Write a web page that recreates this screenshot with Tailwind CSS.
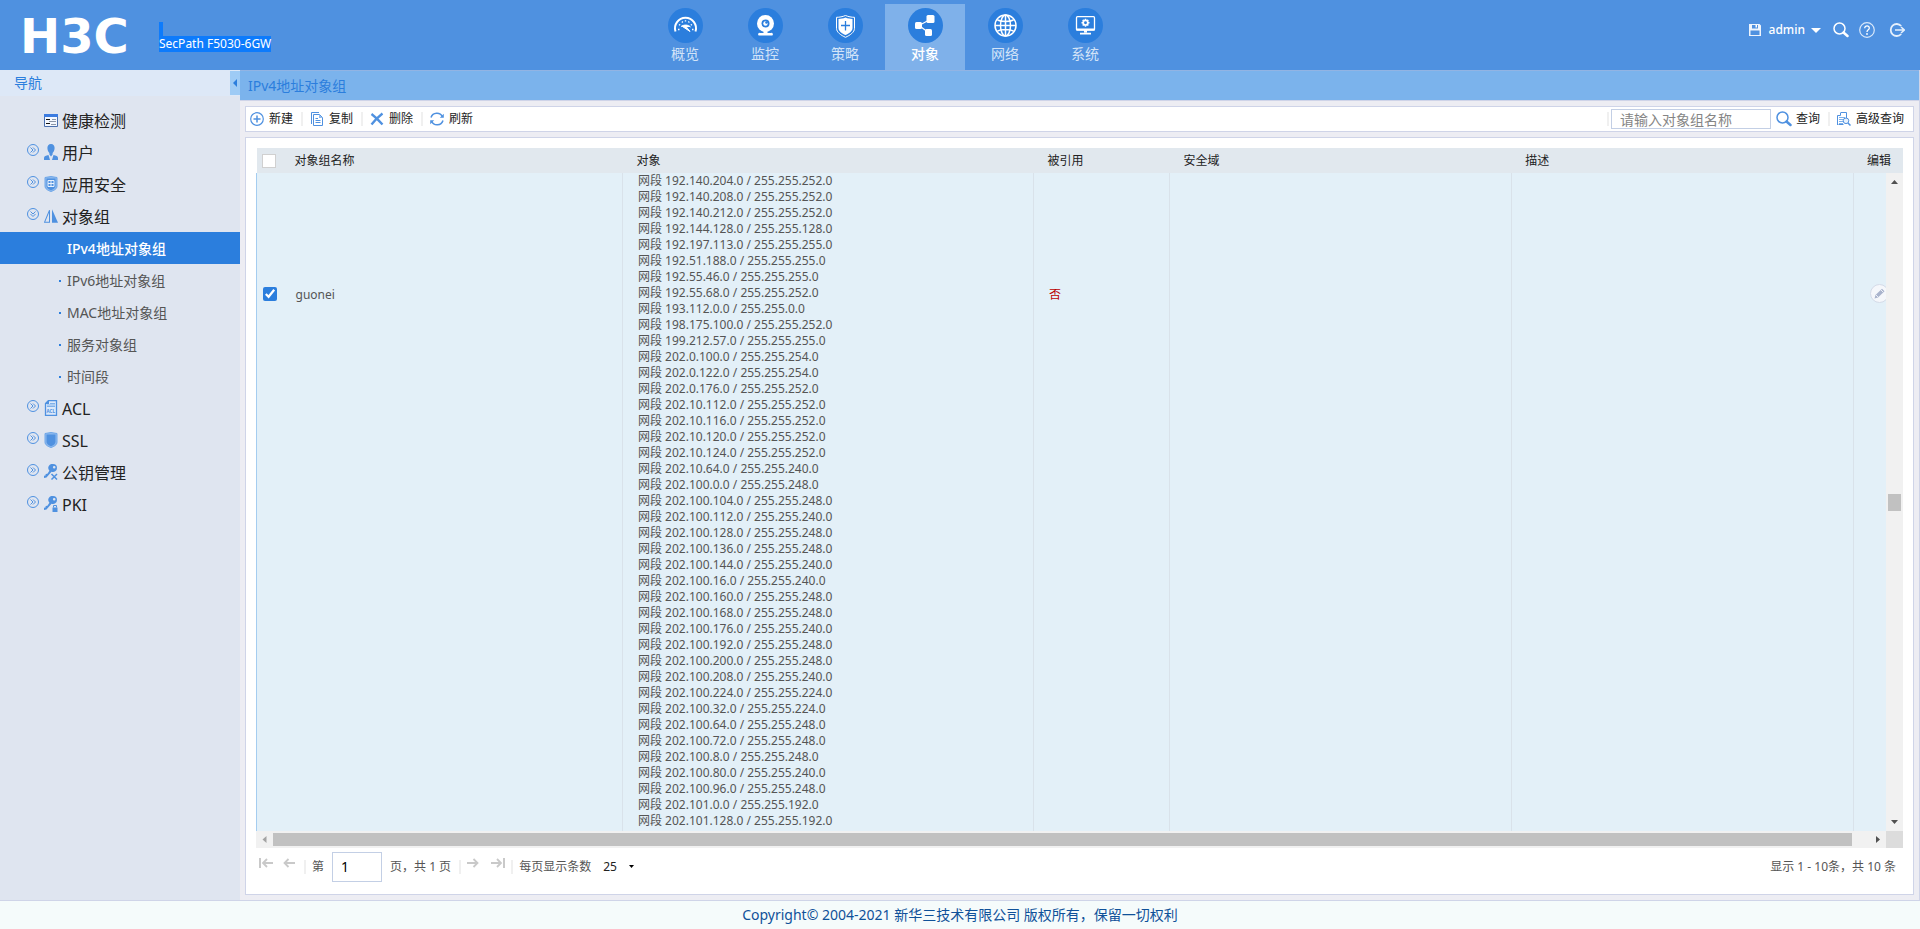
<!DOCTYPE html>
<html lang="zh-CN">
<head>
  <meta charset="UTF-8">
  <meta name="viewport" content="width=device-width, initial-scale=1.0">
  <title>H3C SecPath F5030-6GW</title>
  <script src="https://cdn.jsdelivr.net/npm/@tailwindcss/browser@4"></script>
</head>
<body class="flex min-h-screen flex-col bg-[#ededf3] font-['Noto_Sans','Noto_Sans_CJK_SC',sans-serif] text-xs text-[#222]">
  <!-- shared icons -->
  <svg class="hidden" xmlns="http://www.w3.org/2000/svg">
    <symbol id="expand" viewBox="0 0 12 12">
      <circle cx="6" cy="6" r="5.5" fill="none" stroke="#4f91e0"/>
      <path d="M3.5 3.5 6 6 3.5 8.5M6 3.5 8.500 6 6 8.500" fill="none" stroke="#4f91e0"/>
    </symbol>
    <symbol id="magnifier" viewBox="0 0 16 16">
      <circle cx="6.500" cy="6.500" r="5.500" fill="none" stroke="currentColor" stroke-width="1.500"/>
      <path d="m10.500 10.500 4 3.500" fill="none" stroke="currentColor" stroke-width="2.500" stroke-linecap="round"/>
    </symbol>
    <symbol id="key" viewBox="0 0 14 16">
      <path d="M9 0a4 4 0 0 1 4 4 4 4 0 0 1-5.500 3.700L2.500 13.500 0 14v-2.200l1.500-.3.200-1.600 1.700-.2 2-3A4 4 0 0 1 9 0Zm1.200 2a1.300 1.300 0 1 0 0 2.600 1.300 1.300 0 0 0 0-2.600Z" fill="#4f91e0" fill-rule="evenodd"/>
    </symbol>
  </svg>

  <header class="flex h-[70px] shrink-0 bg-[#4f91e0] text-white">
    <div class="flex w-[645px] shrink-0 gap-4 pl-5">
      <a href="#" class="w-[123px] font-['DejaVu_Sans'] text-5xl leading-[72px] font-bold">H3C</a>
      <div class="pt-[22px]">
        <div class="h-[14px] w-1 bg-[#0d7bfc]"></div>
        <div class="bg-[#0d7bfc] text-xs leading-4">SecPath F5030-6GW</div>
      </div>
    </div>
    <nav class="flex pt-1 text-sm leading-[22px] text-[#d3e4f8]">
      <a href="#" class="flex w-20 flex-col items-center pt-1">
        <svg class="size-[35px]" viewBox="0 0 35 35">
          <circle cx="17.500" cy="17.500" r="17.500" fill="#2b7edd"/>
          <path d="M7.500 23.500a10.500 10.500 0 1 1 20 0" fill="none" stroke="#fff" stroke-width="2"/>
          <path d="M10 21.500h1.500M24 21.500h1.500M11 16.500l1.200.7M24 16.500l-1.200.7M14 13.500l.7 1M21.200 13.500l-.7 1M17.500 12.200v1.300" fill="none" stroke="#fff" stroke-width="1.400"/>
          <path d="M13 18.500c3-2 7-2 9.500.5M14.500 18.500l7.500 5-4-5z" fill="#fff" stroke="#fff"/>
        </svg>
        概览
      </a>
      <a href="#" class="flex w-20 flex-col items-center pt-1">
        <svg class="size-[35px]" viewBox="0 0 35 35">
          <circle cx="17.500" cy="17.500" r="17.500" fill="#2b7edd"/>
          <circle cx="17.500" cy="15.500" r="8.500" fill="#fff"/>
          <circle cx="17.500" cy="15.500" r="4" fill="#2b7edd"/>
          <circle cx="17.500" cy="15.500" r="2.200" fill="#fff"/>
          <circle cx="18.500" cy="14.500" r="1.300" fill="#2b7edd"/>
          <path d="M15.500 23h4v2H23a1 1 0 0 1 1 2.500H11A1 1 0 0 1 12 25h3.500z" fill="#fff"/>
        </svg>
        监控
      </a>
      <a href="#" class="flex w-20 flex-col items-center pt-1">
        <svg class="size-[35px]" viewBox="0 0 35 35">
          <circle cx="17.500" cy="17.500" r="17.500" fill="#2b7edd"/>
          <path d="M17.500 7.500c3 1.200 6 1.800 9 1.800v11c0 4-4.500 7-9 9-4.500-2-9-5-9-9v-11c3 0 6-.6 9-1.800Z" fill="none" stroke="#fff"/>
          <path d="M17.500 9.500c2.500 1 4.800 1.400 7 1.500v9c0 3.200-3.500 5.500-7 7-3.500-1.500-7-3.800-7-7v-9c2.200-.1 4.500-.5 7-1.500Z" fill="#fff"/>
          <path d="M17.500 13v9.500M13 17.500h9" stroke="#2b7edd" stroke-width="1.300"/>
        </svg>
        策略
      </a>
      <a href="#" class="flex w-20 flex-col items-center bg-[#7fb1ea] pt-1 font-medium text-white">
        <svg class="size-[35px]" viewBox="0 0 35 35">
          <circle cx="17.500" cy="17.500" r="17.500" fill="#2b7edd"/>
          <path d="M20.500 24.500 11 17.500 22 11.500" fill="none" stroke="#fff" stroke-width="1.200"/>
          <rect x="7" y="14" width="7" height="7" rx="1.500" fill="#fff"/>
          <rect x="18.500" y="7" width="8" height="8" rx="1.500" fill="#fff"/>
          <rect x="17" y="21" width="7" height="7" rx="1.500" fill="#fff"/>
        </svg>
        对象
      </a>
      <a href="#" class="flex w-20 flex-col items-center pt-1">
        <svg class="size-[35px]" viewBox="0 0 35 35">
          <circle cx="17.500" cy="17.500" r="17.500" fill="#2b7edd"/>
          <g fill="none" stroke="#fff" stroke-width="1.500">
            <circle cx="17.500" cy="17.500" r="10.500"/>
            <ellipse cx="17.500" cy="17.500" rx="5" ry="10.500"/>
            <path d="M17.500 7v21M7 17.500h21M9.500 12c4 2 12 2 16 0M9.500 23c4-2 12-2 16 0"/>
          </g>
        </svg>
        网络
      </a>
      <a href="#" class="flex w-20 flex-col items-center pt-1">
        <svg class="size-[35px]" viewBox="0 0 35 35">
          <circle cx="17.500" cy="17.500" r="17.500" fill="#2b7edd"/>
          <rect x="8.500" y="8.700" width="18" height="13.500" rx="1" fill="none" stroke="#fff" stroke-width="1.300"/>
          <path d="M8.500 20.500h18v2h-18zM16 22h3v2.500h-3zM12 24.700h11V26.500H12z" fill="#fff"/>
          <circle cx="17.500" cy="14.700" r="2.300" fill="none" stroke="#fff" stroke-width="1.700"/>
          <path d="M17.500 10.700v1.500M17.500 17.200v1.500M13.500 14.700H15M20 14.700h1.500M14.700 11.900l1 1M19.300 16.500l1 1M20.300 11.900l-1 1M15.700 16.500l-1 1" stroke="#fff" stroke-width="1.500"/>
        </svg>
        系统
      </a>
    </nav>
    <div class="ml-auto flex h-[60px] items-center pr-[15px]">
      <button type="button" aria-label="保存" class="mr-2">
        <svg class="size-3" viewBox="0 0 12 12"><path d="M0 0h10.500L12 1.500V12H0zM3 1v3.500h6V1zM1.500 6.500V11h9V6.500z" fill="#fff" fill-rule="evenodd" opacity=".9"/><path d="M6.500 1H8v2.500H6.500z" fill="#fff"/></svg>
      </button>
      <button type="button" class="mr-3 flex items-center gap-[6px] font-medium">
        admin
        <svg class="h-[5px] w-[10px]" viewBox="0 0 10 5"><path d="M0 0h10L5 5z" fill="#fff"/></svg>
      </button>
      <button type="button" aria-label="搜索" class="mr-[10px]"><svg class="size-4"><use href="#magnifier"/></svg></button>
      <button type="button" aria-label="帮助" class="mr-[14px]">
        <svg class="size-4" viewBox="0 0 16 16"><circle cx="8" cy="8" r="7.300" fill="none" stroke="#d9e8fa" stroke-width="1.200"/><path d="M5.700 6.300C5.700 3 10.500 3.200 10.300 6.200 10.200 7.800 8 7.800 8 10" fill="none" stroke="#fff" stroke-width="1.300"/><circle cx="8" cy="12" r=".9" fill="#fff"/></svg>
      </button>
      <button type="button" aria-label="退出">
        <svg class="size-4" viewBox="0 0 16 16"><path d="M12.200 4A6 6 0 1 0 12.200 12" fill="none" stroke="#e6f0fc" stroke-width="1.800"/><path d="M6 8h9M12 5l3.300 3L12 11" fill="none" stroke="#e6f0fc" stroke-width="1.500"/></svg>
      </button>
    </div>
  </header>

  <div class="flex grow">
    <aside class="w-60 shrink-0 bg-[#dfe5f0]">
      <div class="mb-2 flex h-[26px] items-center justify-between bg-[#dde8f7] pl-[14px]">
        <h2 class="text-sm text-[#2b7edd]">导航</h2>
        <button type="button" aria-label="收起导航" class="flex h-6 w-[10px] items-center justify-center bg-[#9ecbf5]">
          <svg class="h-2 w-1" viewBox="0 0 4 8"><path d="M4 0v8L0 4z" fill="#2b7edd"/></svg>
        </button>
      </div>
      <nav>
        <a href="#" class="flex h-8 items-center gap-1 pt-[2px] pl-[44px] text-base">
          <svg class="size-[14px]" viewBox="0 0 14 14"><path d="M.5.5h13v12H.5z" fill="#f4f8ff" stroke="#4a6fae"/><path d="M0 0h14v3H0z" fill="#3b7be0"/><path d="M2 5.500h4M2 9.500h4" stroke="#111"/><path d="M5 7.500h7M8 5.500h4M7 10.500h5" stroke="#8b96a8"/></svg>
          健康检测
        </a>
        <a href="#" class="flex h-8 items-center pt-[2px] text-base">
          <svg class="mr-[5px] mb-[6px] ml-[27px] size-3"><use href="#expand"/></svg>
          <svg class="mr-1 mb-[2px] h-4 w-[14px]" viewBox="0 0 14 16"><path d="M7 0c2.500 0 3.600 1.700 3.600 4S9.300 8.500 8.600 9v1.500L7 12.500 5.400 10.500V9C4.700 8.500 3.400 6.300 3.400 4S4.500 0 7 0ZM4.500 11 6 16H0v-2c0-2 2-2.500 4.500-3ZM9.500 11c2.500.5 4.500 1 4.500 3v2H8z" fill="#4f91e0"/></svg>
          用户
        </a>
        <a href="#" class="flex h-8 items-center pt-[2px] text-base">
          <svg class="mr-[5px] mb-[6px] ml-[27px] size-3"><use href="#expand"/></svg>
          <svg class="mr-1 mb-[2px] h-4 w-[14px]" viewBox="0 0 14 16"><path d="M1 1.500 7 .5l6 1V10c0 3-3 4.500-6 5.500C4 14.500 1 13 1 10z" fill="#8db9ee" stroke="#6ea6e8"/><path d="M2.500 2.500h9V10c0 2-2 3.300-4.500 4.300C4.500 13.300 2.500 12 2.500 10z" fill="#4f91e0"/><path d="M4 4.500h6v6H4zM7 4.500v6M4 7.500h6" fill="none" stroke="#e8f1fd"/></svg>
          应用安全
        </a>
        <a href="#" class="flex h-8 items-center pt-[2px] text-base">
          <svg class="mr-[5px] mb-[6px] ml-[27px] size-3 rotate-90"><use href="#expand"/></svg>
          <svg class="mr-1 mb-[2px] h-4 w-[14px]" viewBox="0 0 14 14" preserveAspectRatio="none"><path d="M5.500 2v10.500H.5z" fill="none" stroke="#4f91e0"/><path d="M8 1v12h6z" fill="#4f91e0"/></svg>
          对象组
        </a>
        <ul class="text-sm text-[#555]">
          <li><a href="#" class="flex h-8 items-center bg-[#2b7edd] pt-px pl-[67px] font-medium text-white">IPv4地址对象组</a></li>
          <li><a href="#" class="flex h-8 items-center gap-[6px] pt-px pl-[59px]"><span class="size-[2px] bg-[#2b7edd]"></span>IPv6地址对象组</a></li>
          <li><a href="#" class="flex h-8 items-center gap-[6px] pt-px pl-[59px]"><span class="size-[2px] bg-[#2b7edd]"></span>MAC地址对象组</a></li>
          <li><a href="#" class="flex h-8 items-center gap-[6px] pt-px pl-[59px]"><span class="size-[2px] bg-[#2b7edd]"></span>服务对象组</a></li>
          <li><a href="#" class="flex h-8 items-center gap-[6px] pt-px pl-[59px]"><span class="size-[2px] bg-[#2b7edd]"></span>时间段</a></li>
        </ul>
        <a href="#" class="flex h-8 items-center pt-[2px] text-base">
          <svg class="mr-[5px] mb-[6px] ml-[27px] size-3"><use href="#expand"/></svg>
          <svg class="mr-1 mb-[2px] h-4 w-[14px]" viewBox="0 0 14 16"><path d="M4.500.5h8v15h-11V3.500z" fill="#dce9fa" stroke="#4f91e0" stroke-width="1.300"/><path d="M1 4 5 0v4z" fill="#4f91e0"/><path d="M6 3.500h5M3 6.500h8M3 5h8" stroke="#7fb1ea"/><text x="2.500" y="13" font-size="4.500" font-weight="bold" fill="#4f91e0">ACL</text></svg>
          ACL
        </a>
        <a href="#" class="flex h-8 items-center pt-[2px] text-base">
          <svg class="mr-[5px] mb-[6px] ml-[27px] size-3"><use href="#expand"/></svg>
          <svg class="mr-1 mb-[2px] h-4 w-[14px]" viewBox="0 0 14 16"><path d="M1 1.500 7 .5l6 1V10c0 3-3 4.500-6 5.500C4 14.500 1 13 1 10z" fill="#8db9ee" stroke="#6ea6e8"/><path d="M2.500 2.500h9V10c0 2-2 3.300-4.500 4.300C4.500 13.300 2.500 12 2.500 10z" fill="#4f91e0"/></svg>
          SSL
        </a>
        <a href="#" class="flex h-8 items-center pt-[2px] text-base">
          <svg class="mr-[5px] mb-[6px] ml-[27px] size-3"><use href="#expand"/></svg>
          <svg class="mr-1 mb-[2px] h-4 w-[14px]" viewBox="0 0 14 16"><use href="#key"/><path d="m7.500 10 5.500 5.500M13 10l-5.500 5.500" stroke="#4f91e0" stroke-width="1.500"/></svg>
          公钥管理
        </a>
        <a href="#" class="flex h-8 items-center pt-[2px] text-base">
          <svg class="mr-[5px] mb-[6px] ml-[27px] size-3"><use href="#expand"/></svg>
          <svg class="mr-1 mb-[2px] h-4 w-[14px]" viewBox="0 0 14 16"><use href="#key"/><path d="M8.500 11.500H13.500v4.500h-5z" fill="#4f91e0"/><path d="M9.500 11.500V9.500h3v2" fill="none" stroke="#4f91e0"/></svg>
          PKI
        </a>
      </nav>
    </aside>

    <main class="flex min-w-0 grow flex-col border-r border-[#cfd4e8]">
      <h1 class="mb-[5px] flex h-[31px] items-center border-y border-t-[#92b4e3] border-b-[#cfd4e8] bg-[#7bb3ec] pl-2 text-sm text-[#2b7edd]">IPv4地址对象组</h1>

      <div class="mr-[5px] mb-[5px] ml-[5px] flex h-[26px] items-center border border-[#cfd4e8] bg-white pr-[9px] pl-1">
        <button type="button" class="flex items-center gap-[5px]">
          <svg class="size-[14px]" viewBox="0 0 14 14"><circle cx="7" cy="7" r="6.300" fill="none" stroke="#4f91e0" stroke-width="1.200"/><path d="M7 3.500v7M3.500 7h7" stroke="#4f91e0" stroke-width="1.500"/></svg>
          新建
        </button>
        <span class="mr-[7px] ml-2 h-[14px] w-[2px] bg-[#f0f0f0]"></span>
        <button type="button" class="flex items-center gap-[5px]">
          <svg class="size-[14px]" viewBox="0 0 14 14"><path d="M1.500 12V.5H9M3.500 2.500h6l3 3v8h-9z" fill="none" stroke="#4f91e0"/><path d="M5.500 6.500H8M5.500 8.500h5M5.500 10.500h5" stroke="#4f91e0"/><path d="M9 2.500v3.500h3.500z" fill="#8db9ee"/></svg>
          复制
        </button>
        <span class="mr-[7px] ml-2 h-[14px] w-[2px] bg-[#f0f0f0]"></span>
        <button type="button" class="flex items-center gap-[5px]">
          <svg class="size-[14px]" viewBox="0 0 14 14"><path d="M1.500 2c4 3 7 6 11 10.500M12.500 1.500C8 5 5 8 1.500 12.500" fill="none" stroke="#4f91e0" stroke-width="2.300"/></svg>
          删除
        </button>
        <span class="mr-[7px] ml-2 h-[14px] w-[2px] bg-[#f0f0f0]"></span>
        <button type="button" class="flex items-center gap-[5px]">
          <svg class="size-[14px]" viewBox="0 0 14 14"><path d="M1 5.500a6.200 6.200 0 0 1 11.500-.8M13 8.500a6.200 6.200 0 0 1-11.500.8" fill="none" stroke="#4f91e0" stroke-width="1.500"/><path d="M13.800 1.800v4h-4zM.2 12.200v-4h4z" fill="#4f91e0"/></svg>
          刷新
        </button>
        <span class="mr-[2px] ml-auto h-[14px] w-[2px] bg-[#f0f0f0]"></span>
        <input type="text" aria-label="对象组名称" placeholder="请输入对象组名称" class="mr-[5px] h-5 w-40 border border-[#c3cfe5] bg-white px-2 text-sm leading-4 placeholder:text-[#858585] focus:outline-none">
        <button type="button" class="flex items-center gap-1">
          <svg class="size-4 text-[#4f91e0]"><use href="#magnifier"/></svg>
          查询
        </button>
        <span class="mr-[7px] ml-2 h-[14px] w-[2px] bg-[#f0f0f0]"></span>
        <button type="button" class="flex items-center gap-[5px]">
          <svg class="size-[14px]" viewBox="0 0 14 14"><path d="M3.500.5h6v6M1.500 12.500h5M.5 13V3.500h3V1" fill="none" stroke="#4f91e0"/><path d="M2 5.500h6M2 7.500h4M2 9.500h4M2 11.500h4" stroke="#7fb1ea"/><circle cx="9" cy="8.800" r="2.800" fill="#eaf3fd" stroke="#4f91e0"/><path d="m11 11 2.500 2.500" stroke="#4f91e0" stroke-width="1.500"/></svg>
          高级查询
        </button>
      </div>

      <section class="mr-[5px] mb-[5px] ml-[5px] grow border border-[#cfd4e8] bg-white px-[10px] pt-[10px]">
        <div class="relative">
          <table class="w-full table-fixed border-collapse text-left">
            <colgroup>
              <col class="w-[35px]">
              <col class="w-[331px]">
              <col class="w-[411px]">
              <col class="w-[136px]">
              <col>
              <col>
              <col class="w-[50px]">
            </colgroup>
            <thead class="bg-[#e1e8ee]">
              <tr class="h-[25px]">
                <th class="pl-[5px]"><input type="checkbox" aria-label="全选" class="block size-[14px] appearance-none border border-[#d0d0d0] bg-white"></th>
                <th class="pl-[3px] font-normal">对象组名称</th>
                <th class="pl-[14px] font-normal">对象</th>
                <th class="pl-[14px] font-normal">被引用</th>
                <th class="pl-[14px] font-normal">安全域</th>
                <th class="pl-[14px] font-normal">描述</th>
                <th class="pl-[14px] font-normal">编辑</th>
              </tr>
            </thead>
            <tbody class="bg-[#e3f0f8] text-[#555]">
              <tr class="align-top">
                <td class="border-l border-[#a5cdf0] pt-[114px] pl-[6px]"><input type="checkbox" aria-label="guonei" checked class="block size-[14px] accent-[#2b7edd]"></td>
                <td class="border-r border-[#d9e2ea] pt-[114px] pl-1 leading-4">guonei</td>
                <td class="border-r border-[#d9e2ea] pb-[2px] pl-[15px] leading-4">
                  网段 192.140.204.0 / 255.255.252.0<br>
                  网段 192.140.208.0 / 255.255.252.0<br>
                  网段 192.140.212.0 / 255.255.252.0<br>
                  网段 192.144.128.0 / 255.255.128.0<br>
                  网段 192.197.113.0 / 255.255.255.0<br>
                  网段 192.51.188.0 / 255.255.255.0<br>
                  网段 192.55.46.0 / 255.255.255.0<br>
                  网段 192.55.68.0 / 255.255.252.0<br>
                  网段 193.112.0.0 / 255.255.0.0<br>
                  网段 198.175.100.0 / 255.255.252.0<br>
                  网段 199.212.57.0 / 255.255.255.0<br>
                  网段 202.0.100.0 / 255.255.254.0<br>
                  网段 202.0.122.0 / 255.255.254.0<br>
                  网段 202.0.176.0 / 255.255.252.0<br>
                  网段 202.10.112.0 / 255.255.252.0<br>
                  网段 202.10.116.0 / 255.255.252.0<br>
                  网段 202.10.120.0 / 255.255.252.0<br>
                  网段 202.10.124.0 / 255.255.252.0<br>
                  网段 202.10.64.0 / 255.255.240.0<br>
                  网段 202.100.0.0 / 255.255.248.0<br>
                  网段 202.100.104.0 / 255.255.248.0<br>
                  网段 202.100.112.0 / 255.255.240.0<br>
                  网段 202.100.128.0 / 255.255.248.0<br>
                  网段 202.100.136.0 / 255.255.248.0<br>
                  网段 202.100.144.0 / 255.255.240.0<br>
                  网段 202.100.16.0 / 255.255.240.0<br>
                  网段 202.100.160.0 / 255.255.248.0<br>
                  网段 202.100.168.0 / 255.255.248.0<br>
                  网段 202.100.176.0 / 255.255.240.0<br>
                  网段 202.100.192.0 / 255.255.248.0<br>
                  网段 202.100.200.0 / 255.255.248.0<br>
                  网段 202.100.208.0 / 255.255.240.0<br>
                  网段 202.100.224.0 / 255.255.224.0<br>
                  网段 202.100.32.0 / 255.255.224.0<br>
                  网段 202.100.64.0 / 255.255.248.0<br>
                  网段 202.100.72.0 / 255.255.248.0<br>
                  网段 202.100.8.0 / 255.255.248.0<br>
                  网段 202.100.80.0 / 255.255.240.0<br>
                  网段 202.100.96.0 / 255.255.248.0<br>
                  网段 202.101.0.0 / 255.255.192.0<br>
                  网段 202.101.128.0 / 255.255.192.0
                </td>
                <td class="border-r border-[#d9e2ea] pt-[114px] pl-[15px] leading-4 text-[#b00]">否</td>
                <td class="border-r border-[#d9e2ea]"></td>
                <td class="border-r border-[#d9e2ea]"></td>
                <td class="pt-[111px] pl-4">
                  <button type="button" aria-label="编辑" class="flex size-[19px] items-center justify-center rounded-full border border-[#d5dbe8] bg-[#f5f7fb]">
                    <svg class="size-[11px]" viewBox="0 0 11 11"><path d="M.5 10.500 1.500 7 8 .8 10.500 3.200 4 9.500z" fill="#a9b3cc"/><path d="m7 2 2.300 2.300M2 7l2 2" stroke="#eef1f8"/></svg>
                  </button>
                </td>
              </tr>
            </tbody>
          </table>
          <!-- vertical scrollbar, lies over the last column -->
          <div class="absolute top-[25px] right-0 bottom-0 flex w-[17px] flex-col items-center bg-[#f1f1f1]">
            <svg class="mt-[7px] h-1 w-[7px] shrink-0" viewBox="0 0 7 4"><path d="M0 4h7L3.500 0z" fill="#505050"/></svg>
            <div class="mt-[310px] h-[17px] w-[13px] shrink-0 bg-[#c1c1c1]"></div>
            <svg class="mt-auto mb-[7px] h-1 w-[7px] shrink-0" viewBox="0 0 7 4"><path d="M0 0h7L3.500 4z" fill="#505050"/></svg>
          </div>
        </div>
        <!-- horizontal scrollbar -->
        <div class="flex h-[17px] items-center bg-[#f1f1f1]">
          <svg class="mx-[6px] h-[7px] w-[5px]" viewBox="0 0 4 7"><path d="M4 0v7L0 3.500z" fill="#a3a3a3"/></svg>
          <div class="h-[13px] grow bg-[#c1c1c1]"></div>
          <svg class="mr-[6px] ml-6 h-[7px] w-1" viewBox="0 0 4 7"><path d="M0 0v7l4-3.500z" fill="#505050"/></svg>
          <div class="size-[17px] bg-[#dcdcdc]"></div>
        </div>

        <div class="mt-[3px] flex h-[31px] items-center pl-[3px] text-[#555]">
          <button type="button" aria-label="首页" disabled class="mr-[10px] mb-2">
            <svg class="h-[10px] w-[14px]" viewBox="0 0 14 10"><path d="M1 0v10" stroke="#c9c9c9" stroke-width="2"/><path d="M14 5H4M8 1 4 5l4 4" fill="none" stroke="#c9c9c9" stroke-width="1.800"/></svg>
          </button>
          <button type="button" aria-label="上一页" disabled class="mb-2">
            <svg class="h-[10px] w-3" viewBox="0 0 12 10"><path d="M12 5H1.500M5.500 1l-4 4 4 4" fill="none" stroke="#c9c9c9" stroke-width="1.800"/></svg>
          </button>
          <span class="mr-[6px] ml-[9px] h-[14px] w-[2px] bg-[#f0f0f0]"></span>
          <label for="page">第</label>
          <input id="page" type="text" value="1" class="mr-2 ml-2 h-[30px] w-[50px] border border-[#c3cfe5] px-2 text-sm text-black focus:outline-none">
          <span>页，共 1 页</span>
          <span class="mr-[6px] ml-2 h-[14px] w-[2px] bg-[#f0f0f0]"></span>
          <button type="button" aria-label="下一页" disabled class="mr-3 mb-2">
            <svg class="h-[10px] w-3" viewBox="0 0 12 10"><path d="M0 5h10.500M6.500 1l4 4-4 4" fill="none" stroke="#c9c9c9" stroke-width="1.800"/></svg>
          </button>
          <button type="button" aria-label="末页" disabled class="mb-2">
            <svg class="h-[10px] w-[14px]" viewBox="0 0 14 10"><path d="M13 0v10" stroke="#c9c9c9" stroke-width="2"/><path d="M0 5h10M6 1l4 4-4 4" fill="none" stroke="#c9c9c9" stroke-width="1.800"/></svg>
          </button>
          <span class="mr-[6px] ml-[6px] h-[14px] w-[2px] bg-[#f0f0f0]"></span>
          <label for="pageSize">每页显示条数</label>
          <select id="pageSize" class="ml-3 w-[26px] appearance-none text-[#222] focus:outline-none">
            <option>25</option>
            <option>50</option>
            <option>100</option>
          </select>
          <svg class="h-[3px] w-[5px]" viewBox="0 0 5 3"><path d="M0 0h5L2.500 3z" fill="#000"/></svg>
          <span class="mr-[7px] ml-auto">显示 1 - 10条，共 10 条</span>
        </div>
      </section>
    </main>
  </div>

  <footer class="h-[29px] shrink-0 border-t border-[#cfd4e8] bg-[#f5fbfb] text-center text-sm leading-7 text-[#0f5199]">Copyright© 2004-2021 新华三技术有限公司 版权所有，保留一切权利</footer>
</body>
</html>
